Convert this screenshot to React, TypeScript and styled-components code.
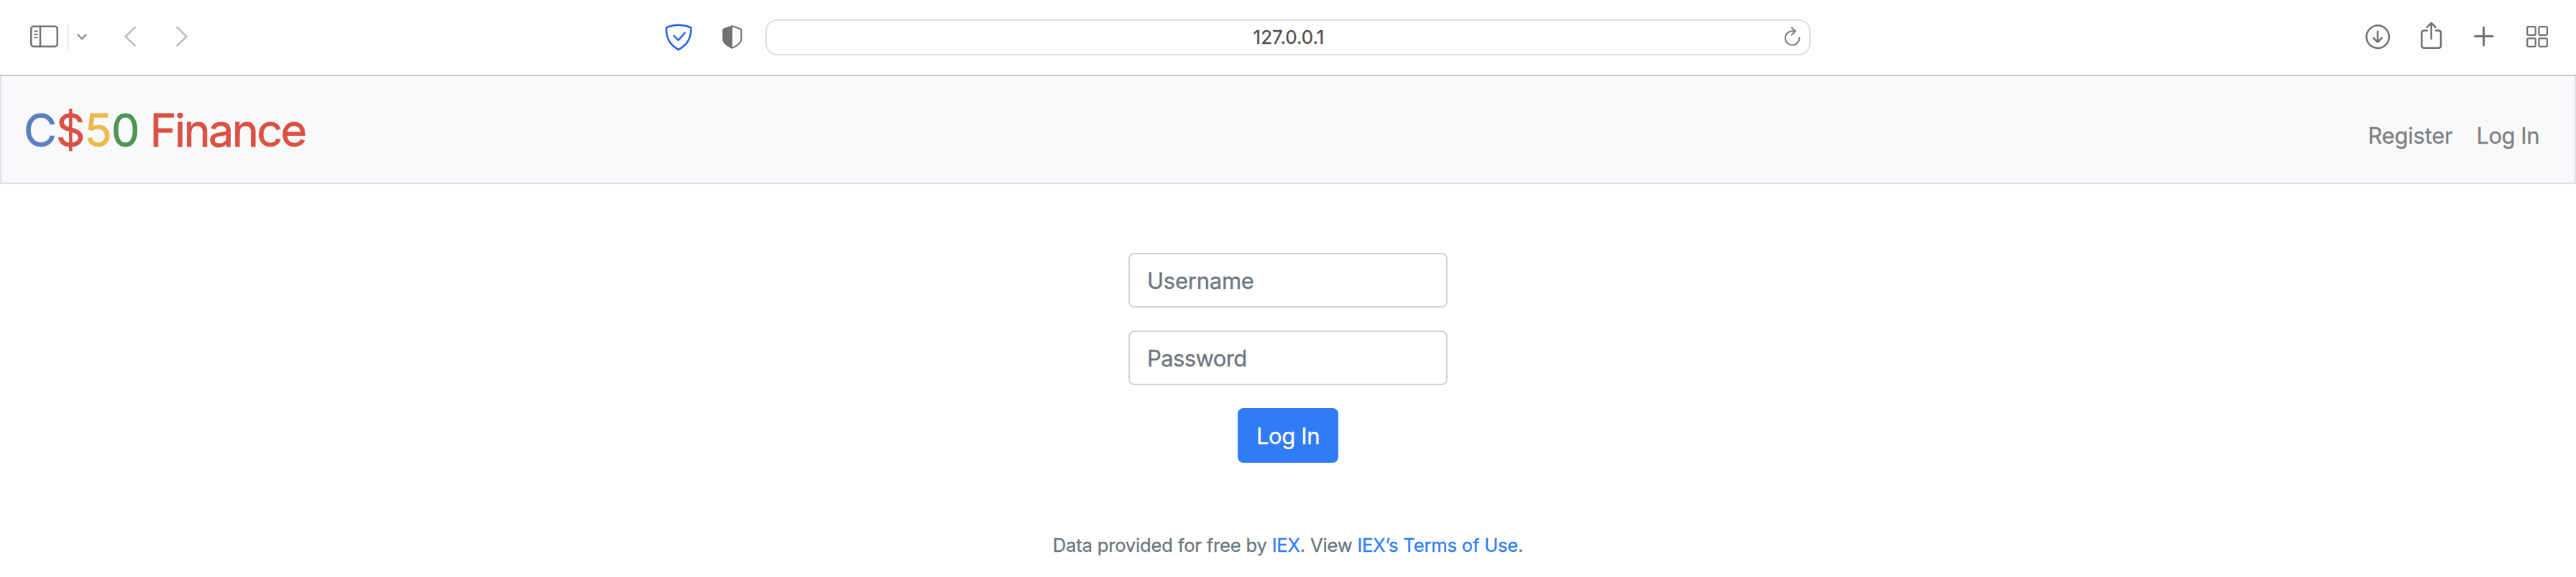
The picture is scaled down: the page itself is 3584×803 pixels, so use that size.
import React from "react";
import styled, { createGlobalStyle } from "styled-components";

const GlobalStyle = createGlobalStyle`
  *, *::before, *::after { box-sizing: border-box; }
  body {
    margin: 0;
    background: #fff;
    font-family: Inter, "Liberation Sans", sans-serif;
    font-size: 31px;
    font-weight: 400;
    line-height: 48px;
    -webkit-text-stroke-width: 0.3px;
  }
`;

const Window = styled.div`
  min-height: 803px;
  overflow: hidden;
`;

const Toolbar = styled.header`
  display: flex;
  align-items: flex-start;
  height: 106px;
  background: #fdfdfd;
  border-bottom: 1px solid #c9cdd1;
  box-shadow: inset 0 -1px 0 #b9bdc1;
`;

const ToolGroup = styled.div<{ $width?: number; $end?: boolean }>`
  display: flex;
  flex: none;
  width: ${(p) => (p.$width ? `${p.$width}px` : "auto")};
  margin-left: ${(p) => (p.$end ? "auto" : "0")};
  padding-right: ${(p) => (p.$end ? "38px" : "0")};
`;

const ToolIcon = styled.svg<{ $left?: number; $top: number; $color?: string; $stroke?: number }>`
  display: block;
  flex: none;
  margin-left: ${(p) => p.$left ?? 0}px;
  margin-top: ${(p) => p.$top}px;
  fill: none;
  stroke: ${(p) => p.$color ?? "#717171"};
  stroke-width: ${(p) => p.$stroke ?? 2.5};
  stroke-linecap: round;
  stroke-linejoin: round;
`;

const Separator = styled.span`
  width: 2px;
  height: 36px;
  margin: 34px 0 0 12px;
  background: #ececec;
`;

const AddressBar = styled.div`
  display: flex;
  align-items: center;
  width: 1454px;
  height: 50px;
  margin: 27px 0 0 32px;
  padding: 0 12px 0 37px;
  border: 2px solid #dedede;
  border-radius: 16px;
  background: #fff;
`;

const Address = styled.span`
  flex: 1;
  color: #4c4c4c;
  font-size: 26px;
  letter-spacing: 0;
  text-align: center;
`;

const Navbar = styled.nav`
  display: flex;
  justify-content: space-between;
  height: 150px;
  padding: 0 49px 0 31px;
  border: 2px solid #dee0e6;
  border-top: 0;
  background: #f8f9fb;
`;

const Brand = styled.a`
  padding-top: 27px;
  font-size: 63px;
  line-height: 96px;
  white-space: pre;
  -webkit-text-stroke-width: 0.8px;
`;

const Tint = styled.span<{ $color: string; $tracking?: number }>`
  color: ${(p) => p.$color};
  letter-spacing: ${(p) => p.$tracking ?? -1}px;
`;

const NavLinks = styled.div`
  display: flex;
  gap: 33px;
  padding-top: 59px;
  color: #7f7f7f;
`;

const NavLink = styled.a<{ $tracking: number }>`
  letter-spacing: ${(p) => p.$tracking}px;
`;

const Main = styled.main`
  display: flex;
  flex-direction: column;
  align-items: center;
  padding-top: 96px;
`;

const LoginForm = styled.form`
  display: flex;
  flex-direction: column;
  align-items: center;
  gap: 32px;
`;

const Field = styled.input<{ $tracking: number }>`
  width: 444px;
  height: 76px;
  padding: 0 24px;
  border: 2px solid #ced4da;
  border-radius: 8px;
  background: #fff;
  font: inherit;
  letter-spacing: ${(p) => p.$tracking}px;
  outline: none;
  &::placeholder { color: #6c757d; opacity: 1; -webkit-text-stroke-color: #6c757d; }
`;

const SubmitButton = styled.button`
  width: 140px;
  height: 76px;
  padding: 2px 0 0;
  border: 0;
  border-radius: 8px;
  background: #307cf7;
  color: #fff;
  font: inherit;
  letter-spacing: -0.4px;
`;

const Credits = styled.footer`
  margin-top: 91px;
  color: #6c757d;
  font-size: 25.6px;
  line-height: 48px;
  letter-spacing: -0.2px;
  white-space: nowrap;
`;

const CreditLink = styled.a`
  color: #307cf7;
`;

export default function App() {
  return (
    <Window>
      <GlobalStyle />
      <Toolbar>
        <ToolGroup $width={925}>
          <ToolIcon $left={42} $top={35} width="40" height="32" viewBox="0 0 40 32">
            <rect x="1.3" y="1.7" width="36.5" height="28" rx="3.5" />
            <path d="M14 2v27.5" />
            <path d="M6 8.5h4M6 13h4M6 17.3h4" strokeWidth="1.8" />
          </ToolIcon>
          <Separator />
          <ToolIcon $left={11} $top={46} $color="#929298" width="14" height="11" viewBox="0 0 14 11">
            <path d="M1.5 2.3L7 8.2l5.5-5.9" />
          </ToolIcon>
          <ToolIcon $left={52} $top={36} $color="#bcbcbc" width="18" height="30" viewBox="0 0 18 30">
            <path d="M14.7 2.2L1.7 15l13 12.5" />
          </ToolIcon>
          <ToolIcon $left={53} $top={36} $color="#bcbcbc" width="18" height="30" viewBox="0 0 18 30">
            <path d="M2.4 2.2L15.6 15l-13.2 12.5" />
          </ToolIcon>
        </ToolGroup>
        <ToolGroup>
          <ToolIcon $top={33} $color="#2463df" width="38" height="38" viewBox="0 0 38 38">
            <path d="M2 5.4Q19-1.8 36.5 5.4C36.8 20 31.5 29 19 36.2C6.8 29 1.6 20 2 5.4z" />
            <path d="M12.8 16.9L18.7 23l9-10.2" />
          </ToolIcon>
          <ToolIcon $left={42} $top={35} $stroke={2} width="28" height="33" viewBox="0 0 28 33">
            <path d="M13.7 1.2L25 5.2Q26.3 5.7 26.3 7V19Q26.3 23.5 22.5 26.5Q19 29.5 13.7 31.8Q8.5 29.5 4.9 26.5Q1.2 23.5 1.2 19V7Q1.2 5.7 2.5 5.2z" />
            <path d="M14 1.2L2.5 5.2Q1.2 5.7 1.2 7V19Q1.2 23.5 4.9 26.5Q8.5 29.5 14 31.8z" fill="#717171" stroke="none" />
          </ToolIcon>
          <AddressBar>
            <Address>127.0.0.1</Address>
            <ToolIcon $top={-4} $color="#7c7c7c" $stroke={2} width="23" height="27" viewBox="0 0 23 27">
              <path d="M21.4 15.3A9.8 9.8 0 1 1 11.8 6.2L16 6.5" />
              <path d="M10.8 1.5L16 6.5l-5.4 5" />
            </ToolIcon>
          </AddressBar>
        </ToolGroup>
        <ToolGroup $end>
          <ToolIcon $top={34} width="35" height="35" viewBox="0 0 35 35">
            <circle cx="17.2" cy="17.2" r="15.7" />
            <path d="M17 9.8v14.8M11.3 19l5.7 5.6 5.7-5.6" />
          </ToolIcon>
          <ToolIcon $left={42} $top={30} width="30" height="39" viewBox="0 0 30 39">
            <path d="M8.7 12.5H5Q1.3 12.5 1.3 16v17.2Q1.3 36.8 5 36.8h19.5Q28 36.8 28 33.2V16Q28 12.5 24.5 12.5H21" />
            <path d="M14.7 24V2.5M8.7 7.8l6-5.8 6 5.8" />
          </ToolIcon>
          <ToolIcon $left={44} $top={36} $stroke={3} width="28" height="29" viewBox="0 0 28 29">
            <path d="M13.5 2.3v24.6M1.5 14.6h24.6" />
          </ToolIcon>
          <ToolIcon $left={44} $top={35} $stroke={2.2} width="32" height="32" viewBox="0 0 32 32">
            <rect x="2.2" y="2.2" width="11.5" height="11.7" rx="1.8" />
            <rect x="18.4" y="2.2" width="11.5" height="11.7" rx="1.8" />
            <rect x="2.2" y="18.4" width="11.5" height="11.5" rx="1.8" />
            <rect x="18.4" y="18.4" width="11.5" height="11.5" rx="1.8" />
          </ToolIcon>
        </ToolGroup>
      </Toolbar>
      <Navbar>
        <Brand>
          <Tint $color="#5c80bc">C</Tint>
          <Tint $color="#da5144">$</Tint>
          <Tint $color="#edb94c">5</Tint>
          <Tint $color="#4f9453">0</Tint>
          <Tint $color="#da5144" $tracking={-2.7}> Finance</Tint>
        </Brand>
        <NavLinks>
          <NavLink $tracking={-0.25}>Register</NavLink>
          <NavLink $tracking={-0.5}>Log In</NavLink>
        </NavLinks>
      </Navbar>
      <Main>
        <LoginForm>
          <Field $tracking={-0.25} placeholder="Username" />
          <Field $tracking={-0.6} placeholder="Password" type="password" />
          <SubmitButton type="button">Log In</SubmitButton>
        </LoginForm>
        <Credits>
          Data provided for free by <CreditLink>IEX</CreditLink>. View <CreditLink>IEX’s Terms of Use</CreditLink>.
        </Credits>
      </Main>
    </Window>
  );
}
